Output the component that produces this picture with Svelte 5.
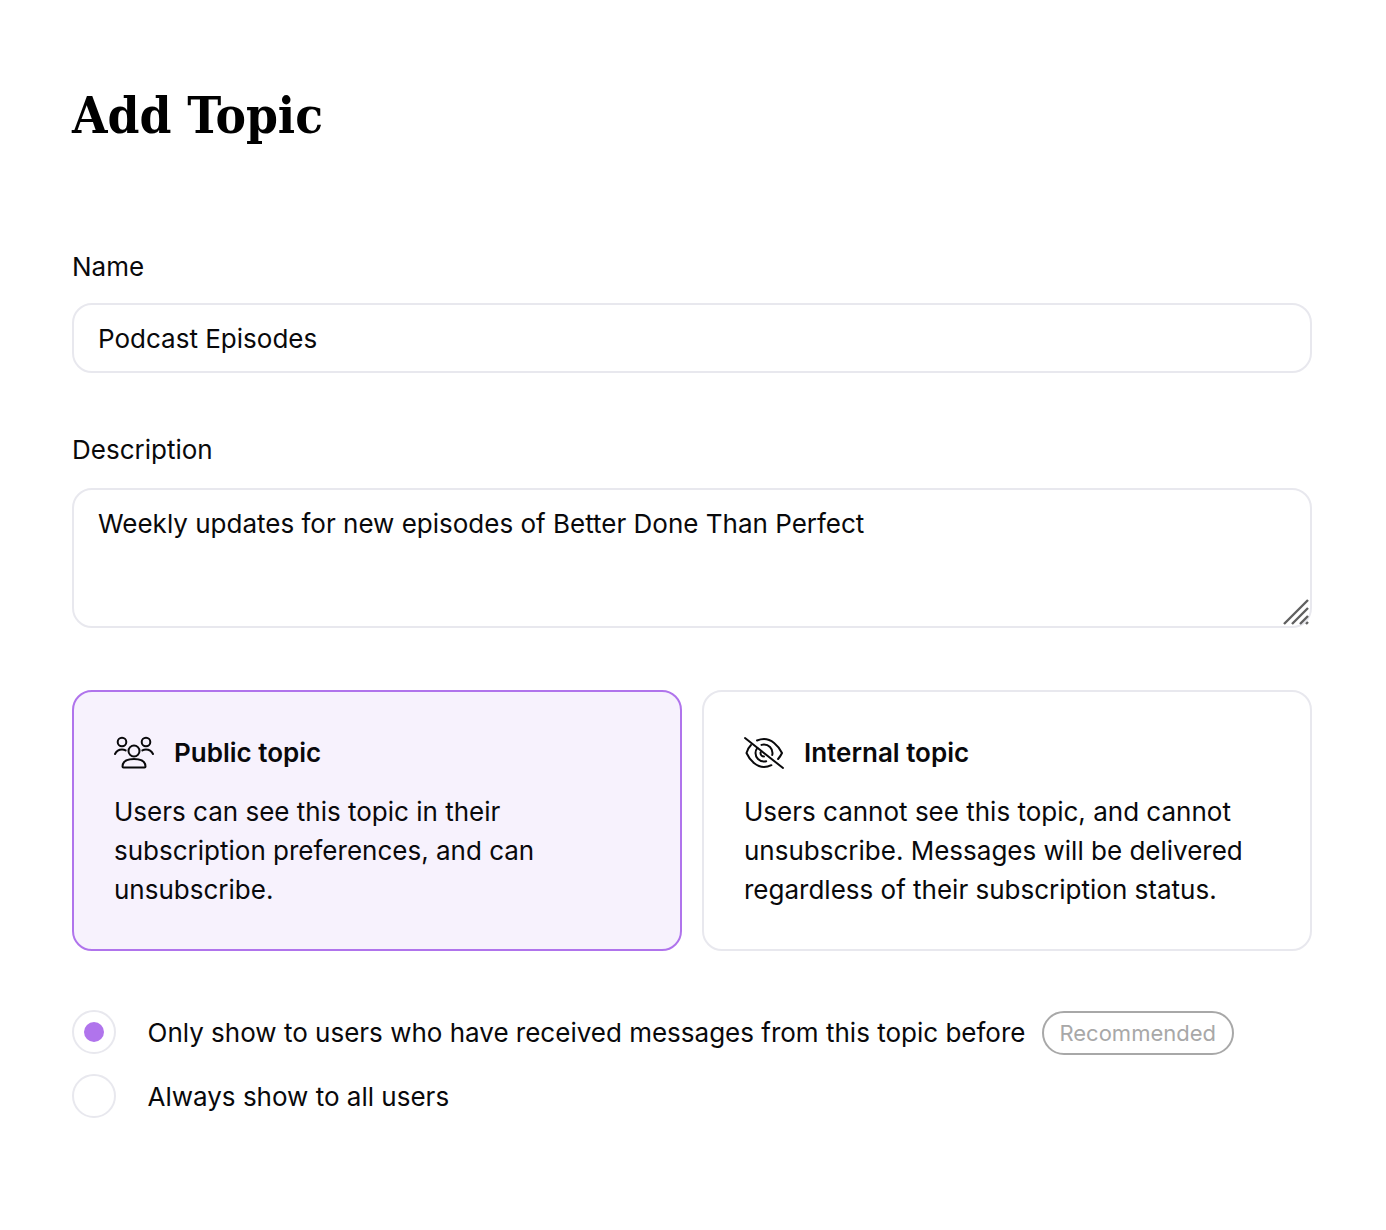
<script>
  let name = $state("Podcast Episodes");
  let description = $state("Weekly updates for new episodes of Better Done Than Perfect");
  let topicType = $state("public");
  let visibility = $state("received");
</script>

<main>
  <h1>Add Topic</h1>

  <div class="field name-field">
    <label for="name">Name</label>
    <input id="name" bind:value={name} />
  </div>

  <div class="field desc-field">
    <label for="description">Description</label>
    <div class="area-wrap">
      <textarea id="description" bind:value={description}></textarea>
      <svg class="resizer" width="26" height="26" viewBox="0 0 26 26" fill="none" stroke="#606060" stroke-width="2.4">
        <path d="M1 25 25 1M9 25 25 9M17 25 25 17M23 25 25 23" />
      </svg>
    </div>
  </div>

  <div class="cards">
    <button class="card" class:selected={topicType === "public"} onclick={() => (topicType = "public")}>
      <span class="card-head">
        <svg width="40" height="34" viewBox="0 0 40 34" fill="none" stroke="#09090b" stroke-width="2" stroke-linecap="round" stroke-linejoin="round">
          <circle cx="8" cy="6" r="4.300" />
          <circle cx="32" cy="6" r="4.300" />
          <circle cx="20" cy="15" r="5.500" />
          <path d="M1 18c1.500-3 4-4.500 7-4.500 1.500 0 2.600.3 3.600.9" />
          <path d="M39 18c-1.500-3-4-4.500-7-4.500-1.500 0-2.600.3-3.600.9" />
          <path d="M9.500 31.500c-.6 0-1-.4-1-1 0-5 4.800-7.500 11.500-7.500s11.500 2.500 11.500 7.500c0 .6-.4 1-1 1z" />
        </svg>
        <strong>Public topic</strong>
      </span>
      <span class="card-text">Users can see this topic in their subscription preferences, and can unsubscribe.</span>
    </button>

    <button class="card" class:selected={topicType === "internal"} onclick={() => (topicType = "internal")}>
      <span class="card-head">
        <svg width="40" height="34" viewBox="0 0 40 34" fill="none" stroke="#09090b" stroke-width="2" stroke-linecap="round" stroke-linejoin="round">
          <path d="M1 2 39 32" />
          <path d="M13 4.500C15.500 3.500 17.700 3 20 3c7 0 14 6 18 14-.9 2-2.200 4-3.900 6" />
          <path d="M7 9C5 11 3.300 14 2.500 17c3.500 8 10.500 14 17.500 14 2.600 0 5.100-.7 7.400-1.800" />
          <path d="M17.500 8.900c.8-.3 1.600-.4 2.500-.4 4.700 0 8.500 3.800 8.500 8.500 0 .7-.1 1.400-.3 2" />
          <path d="M13.300 12C12.200 13.400 11.500 15.100 11.500 17c0 4.700 3.800 8.500 8.500 8.500.8 0 1.500-.1 2.200-.3" />
          <path d="M16.800 16c-.2.300-.3.700-.3 1 0 1.900 1.600 3.500 3.500 3.500" />
        </svg>
        <strong>Internal topic</strong>
      </span>
      <span class="card-text">Users cannot see this topic, and cannot unsubscribe. Messages will be delivered regardless of their subscription status.</span>
    </button>
  </div>

  <div class="options">
    <label class="option">
      <input type="radio" bind:group={visibility} value="received" />
      <span class="dot"></span>
      <span>Only show to users who have received messages from this topic before</span>
      <span class="badge">Recommended</span>
    </label>
    <label class="option">
      <input type="radio" bind:group={visibility} value="all" />
      <span class="dot"></span>
      <span>Always show to all users</span>
    </label>
  </div>
</main>

<style>
  :global(body) {
    background: #fff;
    color: #09090b;
    font-family: Inter, "Liberation Sans", sans-serif;
  }

  main {
    width: 1240px;
    height: 1230px;
    box-sizing: border-box;
    margin-left: 72px;
    padding-top: 84px;
    font-size: 26px;
    line-height: 39px;
  }

  h1 {
    margin: 0;
    font-family: "DejaVu Serif", "Liberation Serif", serif;
    font-stretch: condensed;
    font-weight: 700;
    font-size: 50.8px;
    line-height: 62px;
    color: #000;
  }

  .field {
    display: flex;
    flex-direction: column;
  }

  .name-field {
    margin-top: 105px;
    gap: 20px;
  }

  .desc-field {
    margin-top: 61px;
    gap: 22px;
  }

  .field label {
    font-size: 26px;
    line-height: 32px;
  }

  input:not([type="radio"]),
  textarea {
    display: block;
    box-sizing: border-box;
    width: 100%;
    margin: 0;
    padding: 0 24px;
    border: 2px solid #e8e8ee;
    border-radius: 20px;
    background: #fff;
    color: inherit;
    font: inherit;
    outline: none;
  }

  input:not([type="radio"]) {
    height: 70px;
  }

  .area-wrap {
    position: relative;
  }

  textarea {
    height: 140px;
    padding-top: 14px;
    resize: none;
  }

  .resizer {
    position: absolute;
    right: 3px;
    bottom: 3px;
  }

  .cards {
    display: grid;
    grid-template-columns: 1fr 1fr;
    gap: 20px;
    margin-top: 62px;
  }

  .card {
    display: flex;
    flex-direction: column;
    box-sizing: border-box;
    height: 261px;
    padding: 43px 40px 0;
    border: 2px solid #e8e8ee;
    border-radius: 20px;
    background: #fff;
    color: inherit;
    font: inherit;
    text-align: left;
    cursor: pointer;
  }

  .card.selected {
    border-color: #b074ec;
    background: #f7f2fd;
  }

  .card-head {
    display: flex;
    align-items: center;
    gap: 20px;
    height: 34px;
    margin-bottom: 23px;
  }

  .card-head svg {
    margin-top: 2px;
  }

  .card-head strong {
    font-weight: 600;
  }

  .options {
    display: flex;
    flex-direction: column;
    gap: 20px;
    margin-top: 59px;
  }

  .option {
    display: flex;
    align-items: center;
    height: 44px;
    cursor: pointer;
  }

  .option input {
    position: absolute;
    opacity: 0;
    width: 0;
    height: 0;
  }

  .dot {
    display: flex;
    align-items: center;
    justify-content: center;
    box-sizing: border-box;
    width: 44px;
    height: 44px;
    margin-right: 31.5px;
    border: 2px solid #e8e8ee;
    border-radius: 50%;
  }

  .option input:checked + .dot::after {
    content: "";
    width: 20px;
    height: 20px;
    border-radius: 50%;
    background: #b074ec;
  }

  .badge {
    display: inline-flex;
    align-items: center;
    box-sizing: border-box;
    height: 44px;
    margin-top: 2px;
    margin-left: 17px;
    padding: 0 16px 0 15px;
    border: 2px solid #a8a8a8;
    border-radius: 22px;
    color: #a8a8a8;
    font-size: 22px;
  }
</style>
